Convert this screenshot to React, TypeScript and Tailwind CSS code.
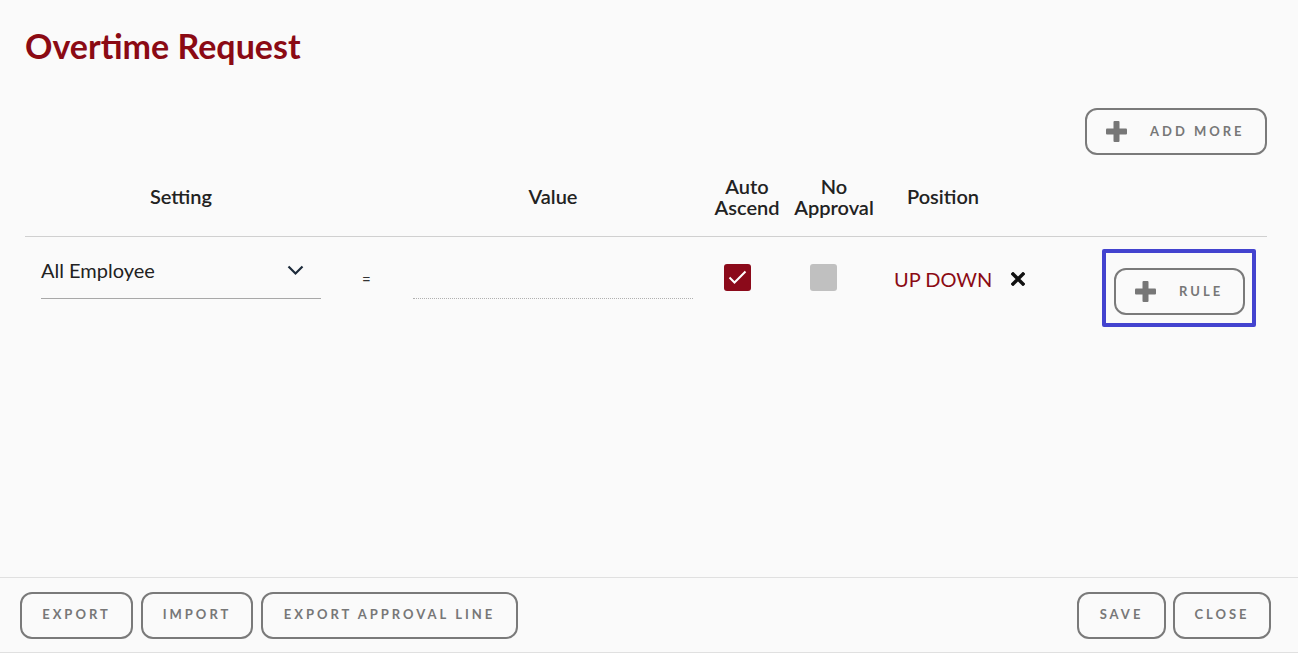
import { ReactNode } from "react"

const Plus = () => (
  <svg width="21" height="21" viewBox="0 0 21 21" className="shrink-0">
    <rect x="7.5" y="0" width="6" height="21" rx="1" fill="#777777" />
    <rect x="0" y="7.5" width="21" height="6" rx="1" fill="#777777" />
  </svg>
)

const OutlineButton = ({ children, className = "" }: { children: ReactNode; className?: string }) => (
  <button
    className={`h-[47px] rounded-[12px] border-2 border-[#7a7a7a] bg-transparent text-[13px] font-bold tracking-[3px] text-[#777777] ${className}`}
  >
    {children}
  </button>
)

const headers = [
  { label: "Setting" },
  { label: "" },
  { label: "Value" },
  { label: "Auto\nAscend" },
  { label: "No\nApproval" },
  { label: "Position" },
  { label: "" },
]

const App = () => {
  return (
    <div className="flex min-h-[653px] flex-col bg-[#fafafa] font-['Lato','Noto_Sans',sans-serif] text-[#222222]">
      <div className="flex-1 pl-[25px] pr-[31px]">
        <h1 className="pt-[26px] text-[34px] font-bold leading-[40px] text-[#8b0a14]">Overtime Request</h1>

        <div className="mt-[42px] flex justify-end">
          <OutlineButton className="flex h-[47px] w-[182px] items-center pl-[19px]">
            <Plus />
            <span className="ml-[23px]">ADD MORE</span>
          </OutlineButton>
        </div>

        {/* header */}
        <div className="mt-[15px] grid h-[67px] grid-cols-[312px_60px_312px_76px_98px_120px_1fr] items-center border-b border-[#d0d0d0] pb-[13px] text-[20px] font-semibold leading-[21px]">
          {headers.map((h, i) => (
            <div key={i} className="whitespace-pre text-center">
              {h.label}
            </div>
          ))}
        </div>

        {/* row */}
        <div className="grid grid-cols-[312px_60px_312px_76px_98px_120px_1fr] items-start">
          <div className="px-[16px]">
            <div className="mt-[12px] flex h-[50px] items-center justify-between border-b border-[#a8a8a8] pb-[7px] pr-[17px] text-[20px] text-[#222222]">
              <span>All Employee</span>
              <svg width="17" height="11" viewBox="0 0 17 11">
                <path d="M1.5 1.5 L8.5 8.5 L15.5 1.5" fill="none" stroke="#1c2a3a" strokeWidth="2.2" />
              </svg>
            </div>
          </div>
          <div className="mt-[32px] pl-[25px] text-[15px] leading-[20px] text-[#333333]">=</div>
          <div className="px-[16px]">
            <div className="mt-[61px] border-b border-dotted border-[#b0b0b0]" />
          </div>
          <div className="pl-[15px]">
            <div className="mt-[27px] flex h-[27px] w-[27px] items-center justify-center rounded-[3px] bg-[#8b0a1a]">
              <svg width="19" height="15" viewBox="0 0 19 15">
                <path d="M1.5 7.5 L6.5 12.5 L17.5 1.5" fill="none" stroke="#ffffff" strokeWidth="2" />
              </svg>
            </div>
          </div>
          <div className="pl-[25px]">
            <div className="mt-[27px] h-[27px] w-[27px] rounded-[3px] bg-[#c0c0c0]" />
          </div>
          <div className="mt-[30px] flex items-center whitespace-nowrap pl-[11px] text-[20px] leading-[24px] text-[#8b0a14]">
            <span>UP DOWN</span>
            <svg width="14" height="14" viewBox="0 0 14 14" className="ml-[19px] shrink-0">
              <path d="M2 2 L12 12 M12 2 L2 12" stroke="#111111" strokeWidth="3.4" strokeLinecap="square" />
            </svg>
          </div>
          <div className="flex justify-end pr-[11px]">
            <div className="mt-[12px] rounded-[2px] border-4 border-[#4343cf] pb-[8px] pl-[8px] pr-[7px] pt-[15px]">
              <OutlineButton className="flex w-[131px] items-center pl-[19px]">
                <Plus />
                <span className="ml-[23px]">RULE</span>
              </OutlineButton>
            </div>
          </div>
        </div>
      </div>

      <div className="flex h-[76px] items-center justify-between border-y border-[#e0e0e0] pl-[20px] pr-[27px]">
        <div className="flex gap-[8px]">
          <OutlineButton className="w-[113px]">EXPORT</OutlineButton>
          <OutlineButton className="w-[112px]">IMPORT</OutlineButton>
          <OutlineButton className="w-[257px]">EXPORT APPROVAL LINE</OutlineButton>
        </div>
        <div className="flex gap-[7px]">
          <OutlineButton className="w-[89px]">SAVE</OutlineButton>
          <OutlineButton className="w-[98px]">CLOSE</OutlineButton>
        </div>
      </div>
    </div>
  )
}

export default App
